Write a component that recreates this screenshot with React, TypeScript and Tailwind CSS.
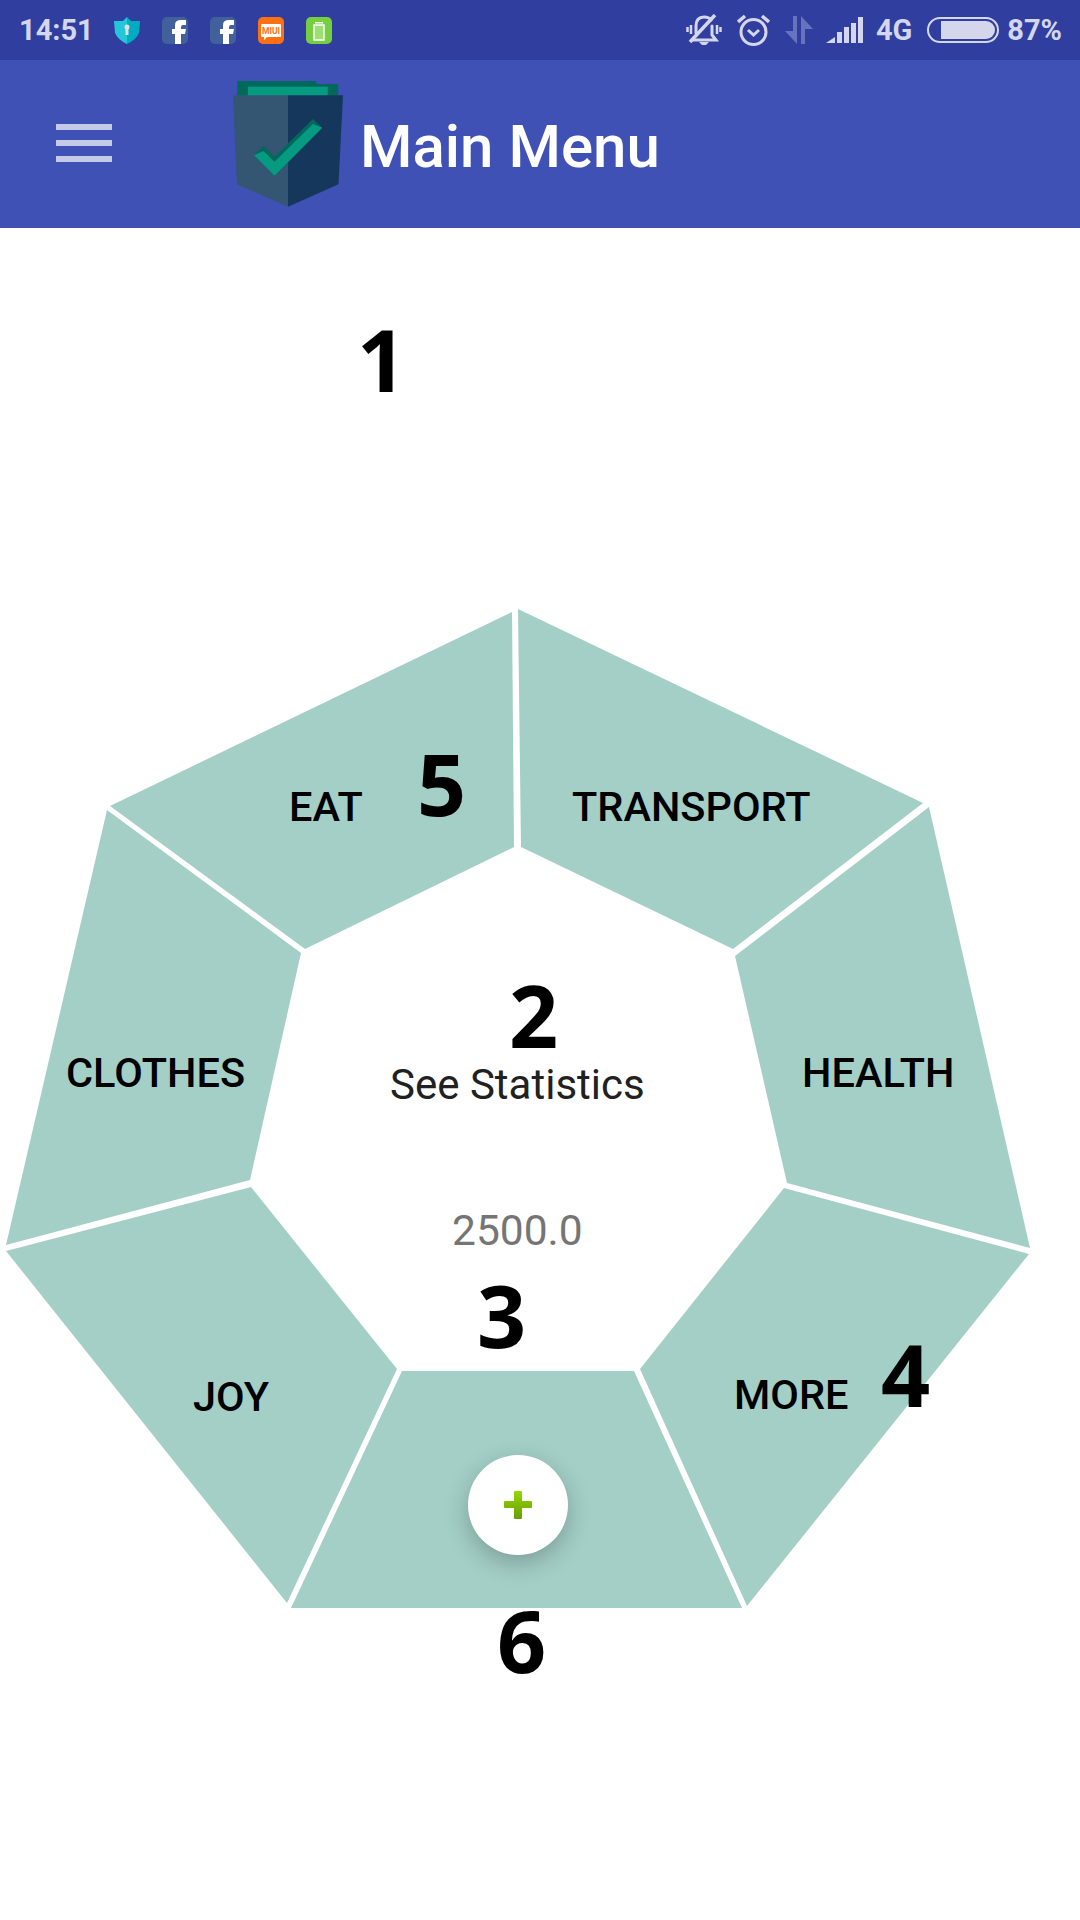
const sansFont = "font-['Roboto','Liberation_Sans',sans-serif]";

const segments = [
  "512,612 110,806 305,949 514,847",
  "518,609 923,803 733,949 521,847",
  "107,810 301,953 250,1180 6,1245",
  "929,807 1030,1248 787,1183 735,956",
  "6,1251 251,1187 397,1369 287,1603",
  "784,1188 1029,1254 747,1606 640,1369",
  "402,1371 634,1371 742,1608 291,1608",
];

function ShieldIcon() {
  return (
    <svg width="26" height="27" viewBox="0 0 26 27">
      <path d="M13 0 L17 4 L26 4 L25 16 Q22 23 13 27 Z" fill="#00acc1" />
      <path d="M13 0 L9 4 L0 4 L1 16 Q4 23 13 27 Z" fill="#26c6da" />
      <circle cx="13" cy="10" r="2.5" fill="#e0e0e0" />
      <rect x="11.5" y="10" width="3" height="8" fill="#e0e0e0" />
    </svg>
  );
}

function FacebookIcon() {
  return (
    <svg width="26" height="27" viewBox="0 0 26 27">
      <rect width="26" height="27" rx="5" fill="#42609c" />
      <path d="M13 27 V17 H10 V12 H13 V8 Q13 3 19 3 H24 V8 H21 Q19 8 19 10 V12 H24 L23 17 H19 V27 Z" fill="#fff" />
    </svg>
  );
}

function MiuiIcon() {
  return (
    <svg width="26" height="27" viewBox="0 0 26 27">
      <rect width="26" height="27" rx="5" fill="#ff7012" />
      <path d="M4 7 H22 Q23 7 23 8 V19 Q23 20 22 20 H9 L6 23 V20 H4 Q3 20 3 19 V8 Q3 7 4 7 Z" fill="#fff" />
      <text x="13" y="17" textAnchor="middle" fontSize="8.5" fontFamily="Roboto" fill="#ff7012">MIUI</text>
    </svg>
  );
}

function BatteryAppIcon() {
  return (
    <svg width="26" height="27" viewBox="0 0 26 27">
      <rect width="26" height="27" rx="5" fill="#76cf3f" />
      <rect x="9" y="5" width="8" height="1.5" fill="#fff" />
      <rect x="8" y="8" width="10" height="15" fill="#9be070" stroke="#fff" strokeWidth="1.5" />
    </svg>
  );
}

function BellOffIcon() {
  return (
    <svg width="36" height="32" viewBox="0 0 36 32" fill="none" stroke="#d4d7ec" strokeWidth="3">
      <path d="M10 19 V12 Q10 3 18 3 Q23 3 25 6 M26 12 V21 L30 26 H7" strokeLinecap="round" />
      <path d="M13 28 H23 L20 31 H16 Z" fill="#d4d7ec" stroke="none" />
      <path d="M4 28 L29 1" strokeWidth="3.5" />
      <path d="M5 11 V20 M1.5 13 V18 M31 11 V20 M34.5 13 V18" strokeWidth="2.5" />
    </svg>
  );
}

function AlarmIcon() {
  return (
    <svg width="33" height="32" viewBox="0 0 33 32" fill="none" stroke="#d4d7ec" strokeWidth="3">
      <circle cx="16.5" cy="18" r="12.5" />
      <path d="M11 16 L16.5 21 L22 16" strokeWidth="3" />
      <path d="M1 8 L8 2 M32 8 L25 2" strokeWidth="3.5" />
    </svg>
  );
}

function DataArrowsIcon() {
  return (
    <svg width="28" height="28" viewBox="0 0 28 28" fill="#6c7ac4">
      <path d="M8 0 H12 V28 L0 15 H8 Z" />
      <path d="M16 28 V0 L28 13 H20 V28 Z" />
    </svg>
  );
}

function SignalIcon() {
  return (
    <svg width="38" height="26" viewBox="0 0 38 26" fill="#d4d7ec">
      <path d="M0 26 L9 20 V26 Z" />
      <rect x="11" y="15" width="5" height="11" />
      <rect x="18" y="10" width="5" height="16" />
      <rect x="25" y="6" width="5" height="20" />
      <rect x="32" y="0" width="5" height="26" />
    </svg>
  );
}

function BatteryIcon() {
  return (
    <div className="flex h-[26px] w-[72px] items-center justify-end rounded-[13px] border-2 border-[#d4d7ec] p-[2px]">
      <div className="h-[18px] w-[54px] rounded-r-[9px] bg-[#d4d7ec]" />
    </div>
  );
}

function AppLogo() {
  return (
    <svg width="110" height="127" viewBox="677 243 318 381" preserveAspectRatio="none">
      <path d="M689 243 H918 V252 H981 V290 H689 Z" fill="#00695c" />
      <rect x="720" y="260" width="231" height="30" fill="#069a80" />
      <path d="M677 286 H836 V620 L688 553 Z" fill="#345673" />
      <path d="M836 286 H995 L982 553 L836 620 Z" fill="#16375c" />
      <path d="M908 357 L935 383 L797 527 L738 466 L765 438 L797 470 Z" fill="#00695c" />
      <path d="M908 372 L935 383 L797 527 L738 466 L765 453 L797 485 Z" fill="#069a80" />
    </svg>
  );
}

export default function App() {
  return (
    <div className={`flex h-[1920px] w-[1080px] flex-col overflow-hidden bg-white ${sansFont}`}>
      <div className="flex h-[60px] items-center bg-[#303f9f] pl-[19px] text-[29px] font-bold text-[#d4d7ec]">
        <span className="w-[95px] leading-none">14:51</span>
        <div className="flex items-center gap-[22px]">
          <ShieldIcon />
          <FacebookIcon />
          <FacebookIcon />
          <MiuiIcon />
          <BatteryAppIcon />
        </div>
        <div className="ml-auto flex items-center pr-[18px]">
          <BellOffIcon />
          <div className="ml-[15px]"><AlarmIcon /></div>
          <div className="ml-[15px] opacity-90"><DataArrowsIcon /></div>
          <div className="ml-[13px]"><SignalIcon /></div>
          <span className="ml-[12px] leading-none">4G</span>
          <div className="ml-[15px]"><BatteryIcon /></div>
          <span className="ml-[8px] leading-none">87%</span>
        </div>
      </div>

      <div className="flex h-[168px] items-start bg-[#3f51b5]">
        <div className="ml-[56px] mt-[64px] flex w-[56px] flex-col gap-[10px]">
          <div className="h-[6px] bg-[#c5cae9]" />
          <div className="h-[6px] bg-[#c5cae9]" />
          <div className="h-[6px] bg-[#c5cae9]" />
        </div>
        <div className="ml-[121px] mt-[21px]"><AppLogo /></div>
        <h1 className="ml-[17px] mt-[57px] text-[60px] font-medium leading-none text-white">Main Menu</h1>
      </div>

      <div className="relative flex-1">
        <svg className="absolute inset-0" width="1080" height="1692" viewBox="0 228 1080 1692">
          {segments.map((points) => (
            <polygon key={points} points={points} fill="#a3cfc7" />
          ))}
        </svg>

        <span className="absolute left-[289px] top-[558px] text-[41.5px] font-medium leading-none text-black">EAT</span>
        <span className="absolute left-[572px] top-[558px] text-[41.5px] font-medium leading-none text-black">TRANSPORT</span>
        <span className="absolute left-[66px] top-[824px] text-[41.5px] font-medium leading-none text-black">CLOTHES</span>
        <span className="absolute left-[802px] top-[824px] text-[41.5px] font-medium leading-none text-black">HEALTH</span>
        <span className="absolute left-[193px] top-[1148px] text-[41.5px] font-medium leading-none text-black">JOY</span>
        <span className="absolute left-[734px] top-[1146px] text-[41.5px] font-medium leading-none text-black">MORE</span>

        <span className="absolute left-[390px] top-[836px] text-[42px] leading-none text-[#212121]">See Statistics</span>
        <span className="absolute left-[452px] top-[982px] text-[42.5px] leading-none text-[#757575]">2500.0</span>

        <span className="absolute left-[357px] top-[96px] font-['Open_Sans',sans-serif] text-[86px] font-bold leading-[70px] text-black">1</span>
        <span className="absolute left-[509px] top-[752px] font-['Open_Sans',sans-serif] text-[86px] font-bold leading-[70px] text-black">2</span>
        <span className="absolute left-[477px] top-[1052px] font-['Open_Sans',sans-serif] text-[86px] font-bold leading-[70px] text-black">3</span>
        <span className="absolute left-[881px] top-[1111px] font-['Open_Sans',sans-serif] text-[86px] font-bold leading-[70px] text-black">4</span>
        <span className="absolute left-[417px] top-[520px] font-['Open_Sans',sans-serif] text-[86px] font-bold leading-[70px] text-black">5</span>
        <span className="absolute left-[497px] top-[1377px] font-['Open_Sans',sans-serif] text-[86px] font-bold leading-[70px] text-black">6</span>

        <button className="absolute left-[468px] top-[1227px] flex h-[100px] w-[100px] items-center justify-center rounded-full bg-white shadow-[0_8px_24px_rgba(0,0,0,0.24)]">
          <svg width="28" height="28" viewBox="0 0 28 28">
            <defs>
              <linearGradient id="plusFill" x1="0" y1="0" x2="0" y2="1">
                <stop offset="0" stopColor="#94d800" />
                <stop offset="1" stopColor="#6a9c00" />
              </linearGradient>
            </defs>
            <path d="M10 1 Q10 0 11 0 H17 Q18 0 18 1 V10 H27 Q28 10 28 11 V16 Q28 17 27 17 H18 V27 Q18 28 17 28 H11 Q10 28 10 27 V17 H1 Q0 17 0 16 V11 Q0 10 1 10 H10 Z" fill="url(#plusFill)" />
          </svg>
        </button>
      </div>
    </div>
  );
}
